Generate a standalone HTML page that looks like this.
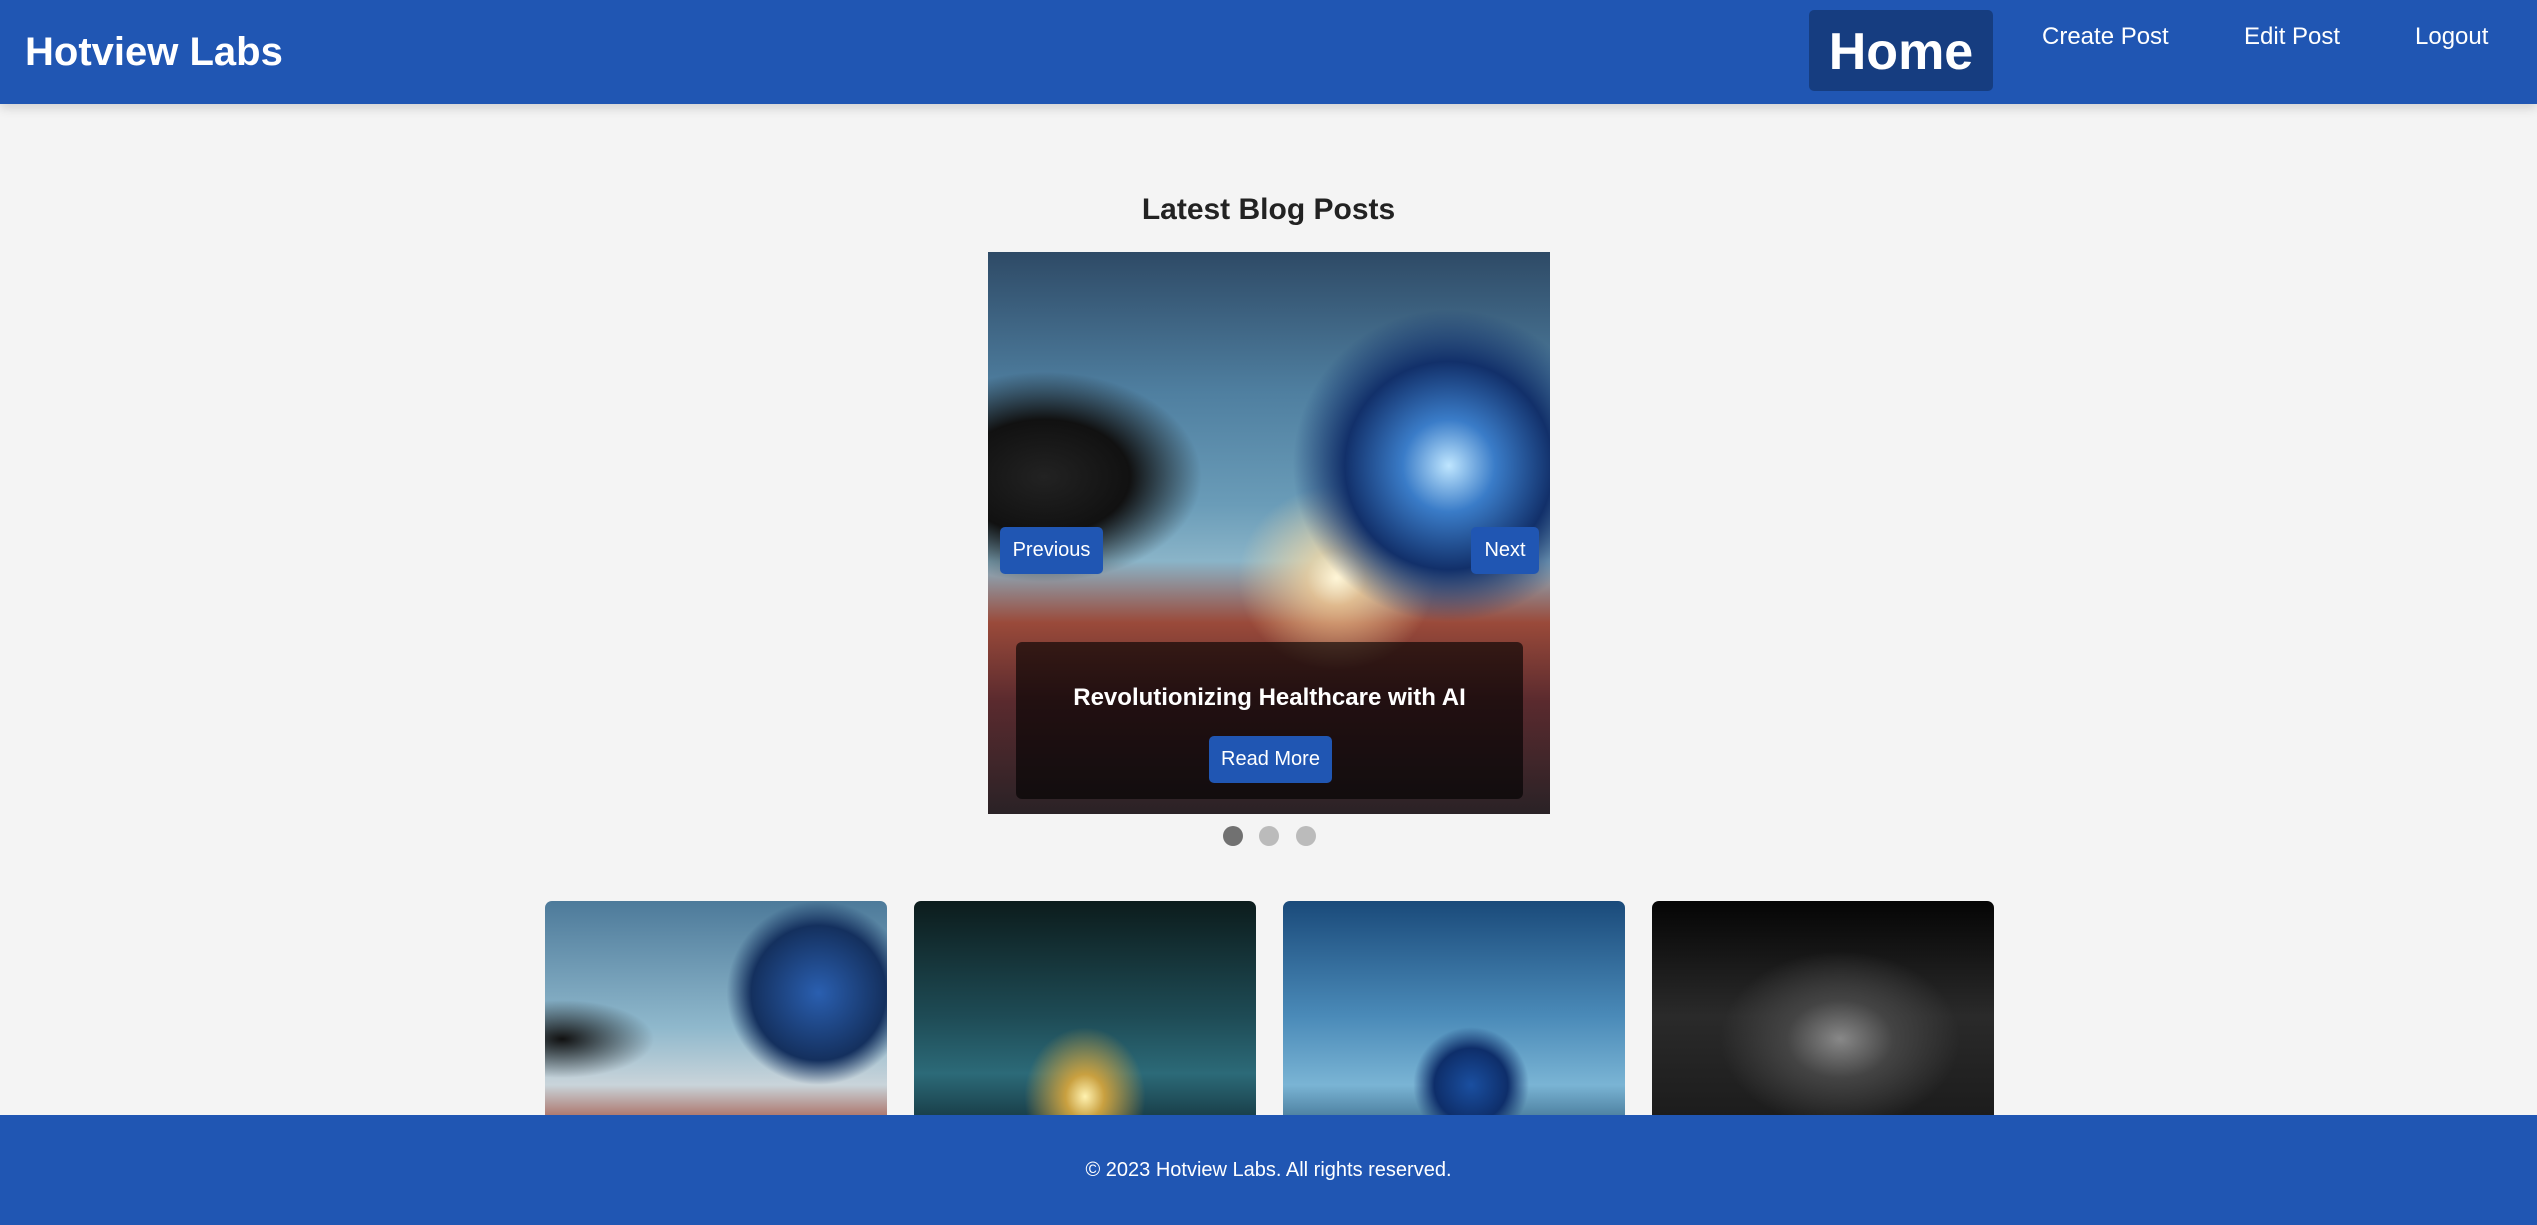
<!DOCTYPE html>
<html><head><meta charset="utf-8"><style>
*{margin:0;padding:0;box-sizing:border-box}
body{width:2537px;height:1225px;background:#f4f4f4;font-family:"Liberation Sans",Arial,sans-serif;position:relative;overflow:hidden}
header{position:absolute;left:0;top:0;width:2537px;height:104px;background:#2056b3;box-shadow:0 4px 10px rgba(0,0,0,.15);z-index:2}
.logo{position:absolute;left:25px;top:30px;color:#fff;font-weight:bold;font-size:40px}
.home{position:absolute;left:1809px;top:10px;width:184px;height:81px;background:#163d80;border-radius:5px;color:#fff;font-weight:bold;font-size:52px;text-align:center;line-height:84px}
.nav{position:absolute;top:23px;color:#fff;font-size:24px}
h2{position:absolute;left:0;width:2537px;top:193px;text-align:center;font-size:30px;color:#222}
.car{position:absolute;left:988px;top:252px;width:562px;height:562px;overflow:hidden;
background:
radial-gradient(circle at 82% 38%,#bfe6ff 0,#3a7cc8 8%,#12306a 18%,transparent 27%),
radial-gradient(ellipse at 62% 58%,#fff6d8 0,rgba(255,220,160,.7) 6%,transparent 20%),
radial-gradient(ellipse at 10% 40%,#222 0,#111 12%,transparent 22%),
linear-gradient(180deg,#2e4a66 0%,#4f7fa0 25%,#6a9cb8 45%,#8ab4c8 55%,#9a4a3a 66%,#5a2a2e 80%,#2a2226 100%)}
.btn{position:absolute;background:#2056b3;color:#fff;border-radius:5px;font-size:20px;text-align:center}
.cap{position:absolute;left:28px;top:390px;width:507px;height:157px;background:rgba(0,0,0,.62);border-radius:6px}
.cap .t{position:absolute;left:0;width:100%;top:42px;text-align:center;color:#fff;font-weight:bold;font-size:24px}
.dot{position:absolute;top:826px;width:20px;height:20px;border-radius:50%;background:#bbb}
.card{position:absolute;top:901px;width:342px;height:230px;border-radius:7px;overflow:hidden}
footer{position:absolute;left:0;top:1115px;width:2537px;height:110px;background:#2056b3;color:#fff;font-size:20px;text-align:center;line-height:110px;z-index:2}
</style></head><body>
<header>
<div class="logo">Hotview Labs</div>
<div class="home">Home</div>
<div class="nav" style="left:2042px">Create Post</div>
<div class="nav" style="left:2244px">Edit Post</div>
<div class="nav" style="left:2415px">Logout</div>
</header>
<h2>Latest Blog Posts</h2>
<div class="car">
<div class="btn" style="left:12px;top:275px;width:103px;height:47px;line-height:47px">Previous</div>
<div class="btn" style="left:483px;top:275px;width:68px;height:47px;line-height:47px">Next</div>
<div class="cap"><div class="t">Revolutionizing Healthcare with AI</div>
<div class="btn" style="left:193px;top:94px;width:123px;height:47px;line-height:47px">Read More</div></div>
</div>
<div class="dot" style="left:1223px;background:#717171"></div>
<div class="dot" style="left:1259px"></div>
<div class="dot" style="left:1296px"></div>
<div class="card" style="left:545px;background:radial-gradient(circle at 80% 40%,#2a5fb0 0,#14305e 22%,transparent 30%),radial-gradient(ellipse at 5% 60%,#111 0,transparent 20%),linear-gradient(180deg,#4d7a9a,#8fb8cc 55%,#c9d4da 80%,#a04a3a)"></div>
<div class="card" style="left:914px;background:radial-gradient(ellipse at 50% 85%,#fff2b0 0,#c9a040 8%,transparent 25%),linear-gradient(180deg,#0c1c1c,#1e4b55 50%,#2c6a78 75%,#13303a)"></div>
<div class="card" style="left:1283px;background:radial-gradient(circle at 55% 80%,#1a4fa0 0,#0e2e6a 14%,transparent 22%),linear-gradient(180deg,#1a4a7a,#4a8ab8 50%,#7ab4d4 80%,#3a6a8a)"></div>
<div class="card" style="left:1652px;background:radial-gradient(ellipse at 55% 60%,#888 0,#444 20%,transparent 45%),linear-gradient(180deg,#050505,#2a2a2a 50%,#1a1a1a)"></div>
<footer>© 2023 Hotview Labs. All rights reserved.</footer>
</body></html>
